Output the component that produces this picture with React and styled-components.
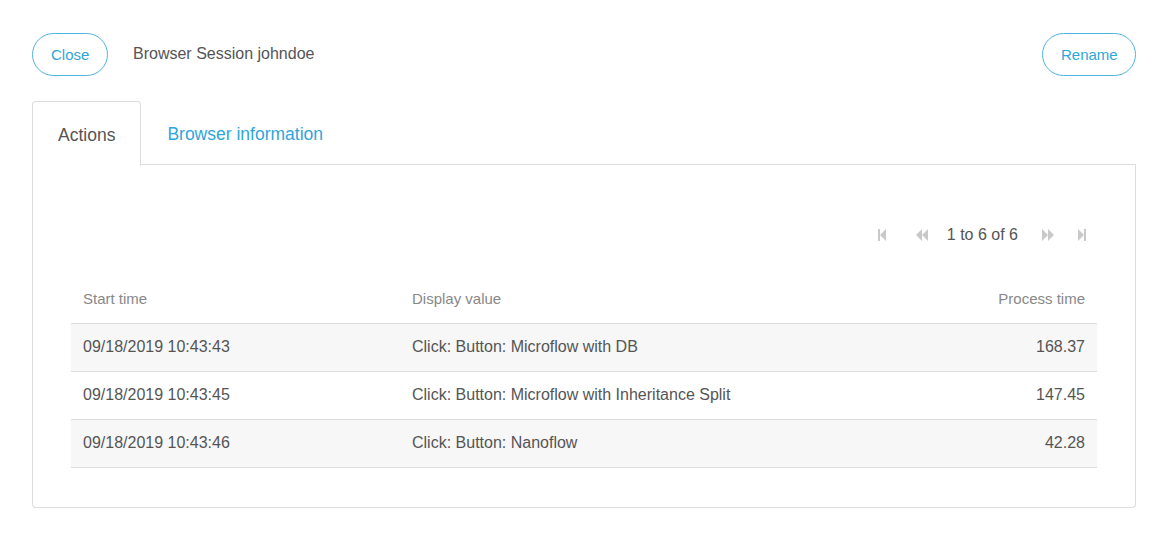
import React from "react";
import styled, { createGlobalStyle } from "styled-components";

const Global = createGlobalStyle`
  html, body { margin: 0; padding: 0; background: #fff; }
  body { font-family: "Liberation Sans", Arial, sans-serif; color: #555; }
`;

const Page = styled.div`
  padding: 33px 29px 0 32px;
`;

const HeaderBar = styled.div`
  display: flex;
  align-items: center;
  height: 43px;
`;

const PillButton = styled.button`
  height: 43px;
  padding: 0 18px;
  border: 1px solid #4fb3e0;
  border-radius: 22px;
  background: #fff;
  color: #2fa6da;
  font-family: "Liberation Sans", Arial, sans-serif;
  font-size: 15px;
  cursor: pointer;
  width: ${(p) => p.$w}px;
`;

const Title = styled.div`
  margin-left: 25px;
  margin-top: -1px;
  font-size: 16px;
  color: #555;
  flex: 1;
`;

const TabList = styled.div`
  display: flex;
  margin-top: 25px;
  height: 64px;
  border-bottom: 1px solid #ddd;
  box-sizing: border-box;
`;

const Tab = styled.div`
  display: flex;
  align-items: center;
  padding: 3px ${(p) => (p.$active ? "25px" : "0")} 0;
  margin-left: ${(p) => (p.$active ? "0" : "25px")};
  font-size: 17.5px;
  color: ${(p) => (p.$active ? "#555" : "#2fa6da")};
  background: ${(p) => (p.$active ? "#fff" : "transparent")};
  border: 1px solid ${(p) => (p.$active ? "#ddd" : "transparent")};
  border-bottom: none;
  border-radius: 4px 4px 0 0;
  margin-bottom: ${(p) => (p.$active ? "-1px" : "0")};
  height: ${(p) => (p.$active ? "65px" : "63px")};
  box-sizing: border-box;
`;

const Panel = styled.div`
  border: 1px solid #ddd;
  border-top: none;
  border-radius: 0 0 4px 4px;
  padding: 54px 38px 38px;
  height: 343px;
  box-sizing: border-box;
`;

const Pager = styled.div`
  display: flex;
  justify-content: flex-end;
  align-items: center;
  height: 32px;
  padding-right: 0.5px;
`;

const PagerButton = styled.div`
  width: 30px;
  height: 32px;
  display: flex;
  align-items: center;
  justify-content: center;
  margin-left: ${(p) => p.$ml || 0}px;
  color: #c9c9c9;
`;

const PagerText = styled.span`
  font-size: 16px;
  color: #555;
  margin-left: 10px;
`;

const Table = styled.table`
  width: 100%;
  margin-top: 24px;
  border-collapse: collapse;
  table-layout: fixed;
`;

const Th = styled.th`
  box-sizing: border-box;
  height: 48px;
  padding: 0 12px;
  font-weight: normal;
  font-size: 15px;
  color: #888;
  text-align: ${(p) => p.$align || "left"};
  width: ${(p) => p.$w || "auto"};
  border-bottom: 1px solid #ddd;
`;

const Tr = styled.tr`
  background: ${(p) => (p.$striped ? "#f7f7f7" : "#fff")};
  border-bottom: 1px solid #ddd;
`;

const Td = styled.td`
  height: 47px;
  padding: 0 12px;
  font-size: 16px;
  color: #555;
  text-align: ${(p) => p.$align || "left"};
`;

const FirstIcon = () => (
  <svg width="9" height="12" viewBox="0 0 9 12">
    <rect x="0" y="0" width="2" height="12" fill="currentColor" />
    <path d="M8 0 L2 6 L8 12 Z" fill="currentColor" />
  </svg>
);
const PrevIcon = () => (
  <svg width="14" height="12" viewBox="0 0 14 12">
    <path d="M7 0 L1 6 L7 12 Z" fill="currentColor" />
    <path d="M13 0 L7 6 L13 12 Z" fill="currentColor" />
  </svg>
);
const NextIcon = () => (
  <svg width="14" height="12" viewBox="0 0 14 12">
    <path d="M1 0 L7 6 L1 12 Z" fill="currentColor" />
    <path d="M7 0 L13 6 L7 12 Z" fill="currentColor" />
  </svg>
);
const LastIcon = () => (
  <svg width="9" height="12" viewBox="0 0 9 12">
    <path d="M1 0 L7 6 L1 12 Z" fill="currentColor" />
    <rect x="7" y="0" width="2" height="12" fill="currentColor" />
  </svg>
);

const rows = [
  ["09/18/2019 10:43:43", "Click: Button: Microflow with DB", "168.37"],
  ["09/18/2019 10:43:45", "Click: Button: Microflow with Inheritance Split", "147.45"],
  ["09/18/2019 10:43:46", "Click: Button: Nanoflow", "42.28"],
];

export default function App() {
  return (
    <Page>
      <Global />
      <HeaderBar>
        <PillButton $w={76}>Close</PillButton>
        <Title>Browser Session johndoe</Title>
        <PillButton $w={94}>Rename</PillButton>
      </HeaderBar>
      <TabList>
        <Tab $active>Actions</Tab>
        <Tab>Browser information</Tab>
      </TabList>
      <Panel>
        <Pager>
          <PagerButton><FirstIcon /></PagerButton>
          <PagerButton $ml={9.5}><PrevIcon /></PagerButton>
          <PagerText>1 to 6 of 6</PagerText>
          <PagerButton $ml={14.5}><NextIcon /></PagerButton>
          <PagerButton $ml={4}><LastIcon /></PagerButton>
        </Pager>
        <Table>
          <thead>
            <tr>
              <Th $w="329px">Start time</Th>
              <Th>Display value</Th>
              <Th $align="right" $w="250px">Process time</Th>
            </tr>
          </thead>
          <tbody>
            {rows.map((r, i) => (
              <Tr key={i} $striped={i % 2 === 0}>
                <Td>{r[0]}</Td>
                <Td>{r[1]}</Td>
                <Td $align="right">{r[2]}</Td>
              </Tr>
            ))}
          </tbody>
        </Table>
      </Panel>
    </Page>
  );
}
